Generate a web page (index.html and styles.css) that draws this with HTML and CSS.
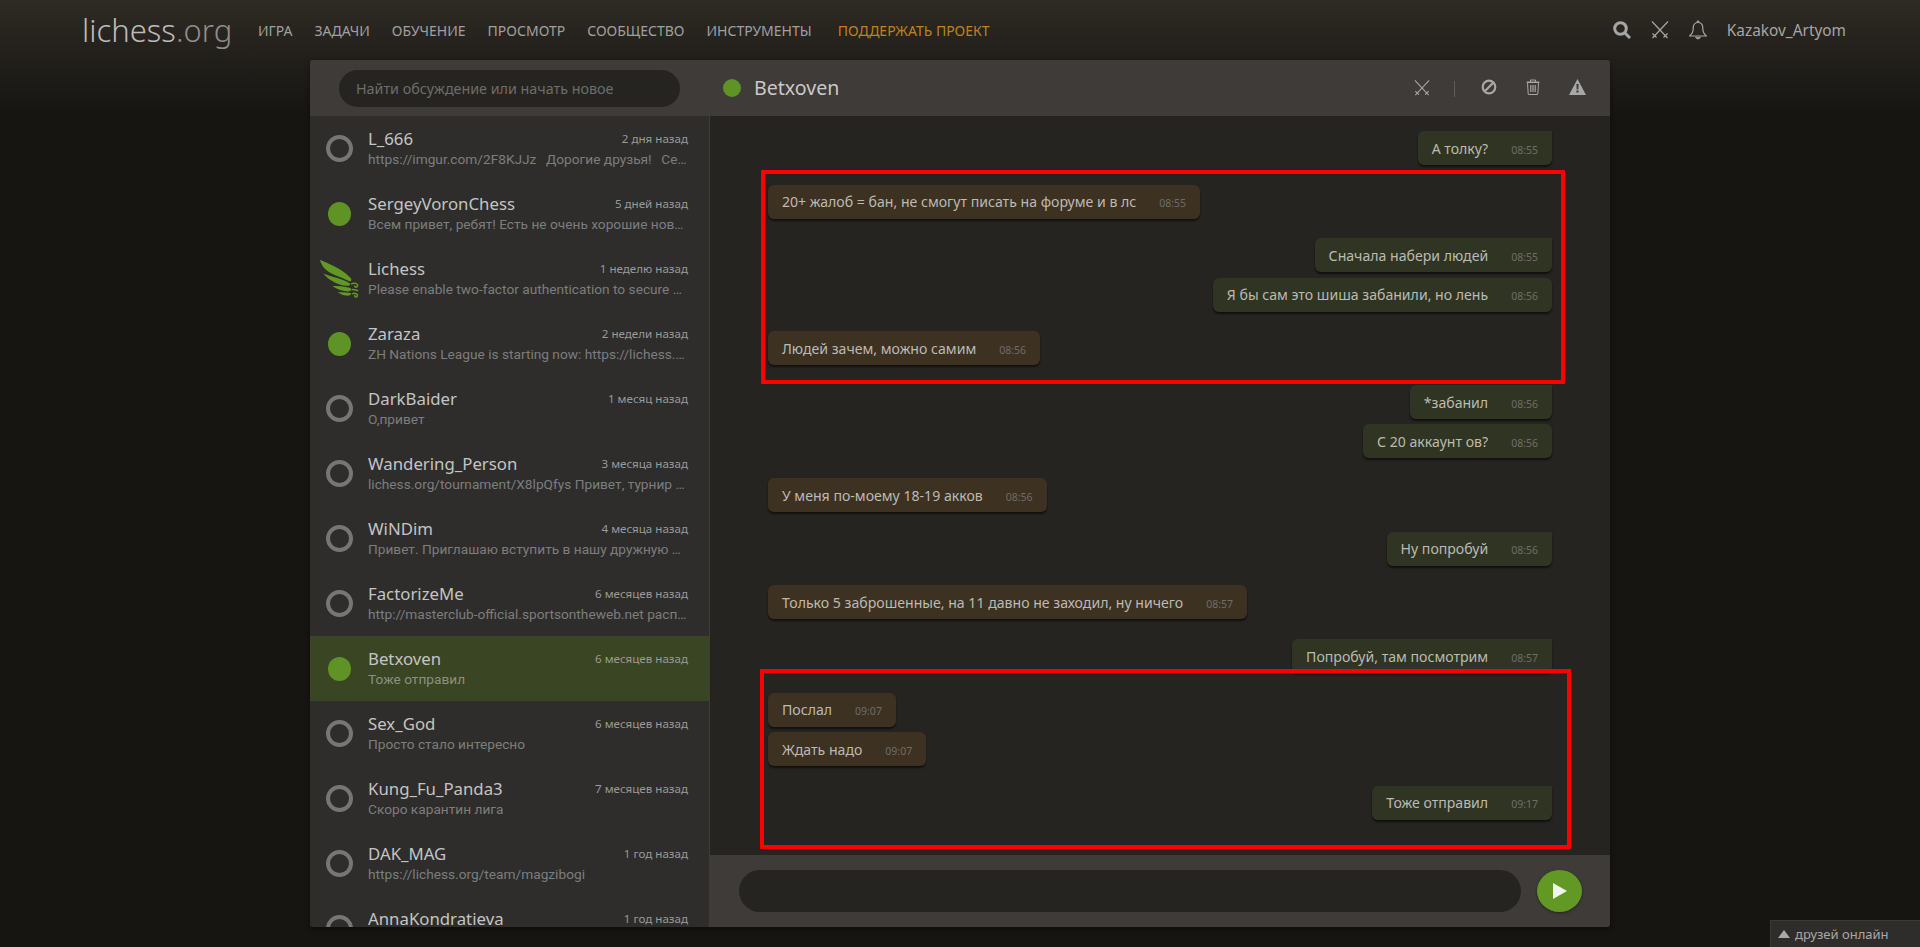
FILE: index.html
```html
<!DOCTYPE html>
<html lang="ru">
  <head>
    <meta charset="utf-8">
    <title>Входящие • lichess.org</title>
    <link rel="stylesheet" href="styles.css">
  </head>
  <body>
    <svg class="sprite" width="0" height="0">
      <symbol id="swords" viewBox="0 0 18 18">
        <path d="M1 .5 L16.500 17 M17 .5 L1.500 17 M1.500 12.500 L5.500 16.500 M16.500 12.500 L12.500 16.500" fill="none" stroke="currentColor" stroke-width="1.200"/>
      </symbol>
    </svg>

    <header class="topbar">
      <a class="logo">lichess<span class="logo-org">.org</span></a>
      <nav class="nav">
        <a>Игра</a>
        <a>Задачи</a>
        <a>Обучение</a>
        <a>Просмотр</a>
        <a>Сообщество</a>
        <a>Инструменты</a>
        <a class="nav-donate">Поддержать проект</a>
      </nav>
      <div class="top-right">
        <svg class="top-icon" viewBox="0 0 18 18">
          <circle cx="7.500" cy="7.500" r="5.800" fill="none" stroke="currentColor" stroke-width="3"/>
          <path d="M11.500 11.500 L17 17" stroke="currentColor" stroke-width="3" fill="none"/>
        </svg>
        <svg class="top-icon"><use href="#swords"/></svg>
        <svg class="top-icon top-bell" viewBox="0 0 18 20">
          <path d="M9 2.500 C5 2.500 4.200 5.500 4.200 8.500 C4.200 12 2.500 14.500 .6 16 L17.400 16 C15.500 14.500 13.800 12 13.800 8.500 C13.800 5.500 13 2.500 9 2.500 Z" fill="none" stroke="currentColor" stroke-width="1.200"/>
          <path d="M7.700 2.500 C7.700 .2 10.300 .2 10.300 2.500 M6.500 17.200 C7 19.500 11 19.500 11.500 17.200 Z" fill="currentColor" stroke="currentColor" stroke-width=".6"/>
        </svg>
        <a class="username">Kazakov_Artyom</a>
      </div>
    </header>

    <main class="inbox">
      <aside class="side">
        <div class="side-head">
          <div class="search">Найти обсуждение или начать новое</div>
        </div>
        <div class="threads">
          <div class="thread">
            <div class="avatar"><span class="ring"></span></div>
            <div class="thread-body">
              <div class="thread-top"><span class="name">L_666</span><time>2 дня назад</time></div>
              <div class="preview">https://imgur.com/2F8KJJz&nbsp;&thinsp; Дорогие друзья!&nbsp;&thinsp; Сегодня мы начинаем новый турнир</div>
            </div>
          </div>
          <div class="thread">
            <div class="avatar"><span class="dot"></span></div>
            <div class="thread-body">
              <div class="thread-top"><span class="name">SergeyVoronChess</span><time>5 дней назад</time></div>
              <div class="preview">Всем привет, ребят! Есть не очень хорошие новости для всех нас</div>
            </div>
          </div>
          <div class="thread">
            <div class="avatar">
              <svg class="wing" viewBox="28 26 120 118">
                <g fill="#629924">
                  <path d="M30 28 C50 38 94 52 124 84 C128 92 122 96 116 92 C95 80 60 72 46 56 C38 48 33 38 30 28 Z"/>
                  <path d="M40 70 C60 78 92 84 120 99 C124 104 118 108 110 107 C90 106 58 92 40 70 Z"/>
                  <path d="M68 108 C85 108 105 109 123 114 C127 120 122 124 116 124 C100 124 82 118 68 108 Z"/>
                  <path d="M84 127 C96 126 110 127 124 129 C126 132 122 137 116 137 C106 137 94 133 84 127 Z"/>
                </g>
                <path d="M124 102 C134 96 146 100 144 108 C142 114 134 112 136 106 M126 119 C132 117 138 120 146 122 M128 131 C137 128 146 132 143 139 C140 143 133 140 136 135" fill="none" stroke="#629924" stroke-width="4.500"/>
              </svg>
            </div>
            <div class="thread-body">
              <div class="thread-top"><span class="name">Lichess</span><time>1 неделю назад</time></div>
              <div class="preview">Please enable two-factor authentication to secure your account now</div>
            </div>
          </div>
          <div class="thread">
            <div class="avatar"><span class="dot"></span></div>
            <div class="thread-body">
              <div class="thread-top"><span class="name">Zaraza</span><time>2 недели назад</time></div>
              <div class="preview">ZH Nations League is starting now: https://lichess.org/tournament</div>
            </div>
          </div>
          <div class="thread">
            <div class="avatar"><span class="ring"></span></div>
            <div class="thread-body">
              <div class="thread-top"><span class="name">DarkBaider</span><time>1 месяц назад</time></div>
              <div class="preview">О,привет</div>
            </div>
          </div>
          <div class="thread">
            <div class="avatar"><span class="ring"></span></div>
            <div class="thread-body">
              <div class="thread-top"><span class="name">Wandering_Person</span><time>3 месяца назад</time></div>
              <div class="preview">lichess.org/tournament/X8lpQfys Привет, турнир начинается уже скоро</div>
            </div>
          </div>
          <div class="thread">
            <div class="avatar"><span class="ring"></span></div>
            <div class="thread-body">
              <div class="thread-top"><span class="name">WiNDim</span><time>4 месяца назад</time></div>
              <div class="preview">Привет. Приглашаю вступить в нашу дружную команду шахматистов</div>
            </div>
          </div>
          <div class="thread">
            <div class="avatar"><span class="ring"></span></div>
            <div class="thread-body">
              <div class="thread-top"><span class="name">FactorizeMe</span><time>6 месяцев назад</time></div>
              <div class="preview">http://masterclub-official.sportsontheweb.net расписание турниров клуба</div>
            </div>
          </div>
          <div class="thread thread-active">
            <div class="avatar"><span class="dot"></span></div>
            <div class="thread-body">
              <div class="thread-top"><span class="name">Betxoven</span><time>6 месяцев назад</time></div>
              <div class="preview">Тоже отправил</div>
            </div>
          </div>
          <div class="thread">
            <div class="avatar"><span class="ring"></span></div>
            <div class="thread-body">
              <div class="thread-top"><span class="name">Sex_God</span><time>6 месяцев назад</time></div>
              <div class="preview">Просто стало интересно</div>
            </div>
          </div>
          <div class="thread">
            <div class="avatar"><span class="ring"></span></div>
            <div class="thread-body">
              <div class="thread-top"><span class="name">Kung_Fu_Panda3</span><time>7 месяцев назад</time></div>
              <div class="preview">Скоро карантин лига</div>
            </div>
          </div>
          <div class="thread">
            <div class="avatar"><span class="ring"></span></div>
            <div class="thread-body">
              <div class="thread-top"><span class="name">DAK_MAG</span><time>1 год назад</time></div>
              <div class="preview">https://lichess.org/team/magzibogi</div>
            </div>
          </div>
          <div class="thread">
            <div class="avatar"><span class="ring"></span></div>
            <div class="thread-body">
              <div class="thread-top"><span class="name">AnnaKondratieva</span><time>1 год назад</time></div>
              <div class="preview">Добрый день</div>
            </div>
          </div>
        </div>
      </aside>

      <section class="chat">
        <div class="chat-head">
          <span class="dot dot-head"></span>
          <span class="chat-title">Betxoven</span>
          <div class="chat-actions">
            <svg class="act act-swords"><use href="#swords"/></svg>
            <span class="act-sep"></span>
            <svg class="act act-ban" viewBox="0 0 16 16">
              <circle cx="8" cy="8" r="6.300" fill="none" stroke="currentColor" stroke-width="2.200"/>
              <path d="M3.800 12.200 L12.200 3.800" stroke="currentColor" stroke-width="2.200"/>
            </svg>
            <svg class="act act-trash" viewBox="0 0 14 16">
              <path d="M1.500 3.500 H12.500 L11.800 15 C11.800 15.400 11.500 15.500 11 15.500 H3 C2.500 15.500 2.200 15.400 2.200 15 Z" fill="none" stroke="currentColor" stroke-width="1"/>
              <path d="M.5 3 H13.500 M4.500 2.800 V1 H9.500 V2.800" fill="none" stroke="currentColor" stroke-width="1"/>
              <path d="M4.800 6 V13 M7 6 V13 M9.200 6 V13" stroke="currentColor" stroke-width="1.200"/>
            </svg>
            <svg class="act act-warn" viewBox="0 0 17 16">
              <path fill-rule="evenodd" fill="currentColor" d="M8.500 0 L17 16 H0 Z M7.400 5 L7.700 10.500 H9.300 L9.600 5 Z M7.400 11.500 V13.500 H9.600 V11.500 Z"/>
            </svg>
          </div>
        </div>

        <div class="messages">
          <div class="group group-mine">
            <div class="msg msg-first"><span>А толку?</span><time>08:55</time></div>
          </div>
          <div class="group">
            <div class="msg"><span>20+ жалоб = бан, не смогут писать на форуме и в лс</span><time>08:55</time></div>
          </div>
          <div class="group group-mine">
            <div class="msg msg-first"><span>Сначала набери людей</span><time>08:55</time></div>
            <div class="msg"><span>Я бы сам это шиша забанили, но лень</span><time>08:56</time></div>
          </div>
          <div class="group">
            <div class="msg"><span>Людей зачем, можно самим</span><time>08:56</time></div>
          </div>
          <div class="group group-mine">
            <div class="msg msg-first"><span>*забанил</span><time>08:56</time></div>
            <div class="msg"><span>С 20 аккаунт ов?</span><time>08:56</time></div>
          </div>
          <div class="group">
            <div class="msg"><span>У меня по-моему 18-19 акков</span><time>08:56</time></div>
          </div>
          <div class="group group-mine">
            <div class="msg msg-first"><span>Ну попробуй</span><time>08:56</time></div>
          </div>
          <div class="group">
            <div class="msg"><span>Только 5 заброшенные, на 11 давно не заходил, ну ничего</span><time>08:57</time></div>
          </div>
          <div class="group group-mine">
            <div class="msg msg-first"><span>Попробуй, там посмотрим</span><time>08:57</time></div>
          </div>
          <div class="group">
            <div class="msg"><span>Послал</span><time>09:07</time></div>
            <div class="msg"><span>Ждать надо</span><time>09:07</time></div>
          </div>
          <div class="group group-mine">
            <div class="msg msg-first"><span>Тоже отправил</span><time>09:17</time></div>
          </div>

          <div class="mark mark-one"></div>
          <div class="mark mark-two"></div>
        </div>

        <div class="composer">
          <div class="composer-input"></div>
          <button class="send" type="button">
            <svg viewBox="0 0 14 16" width="14" height="16"><path d="M0 0 L14 8 L0 16 Z" fill="#f1f6ea"/></svg>
          </button>
        </div>
      </section>
    </main>

    <div class="friends"><span class="friends-arrow"></span>друзей онлайн</div>
  </body>
</html>
```

FILE: styles.css
```css
html, body {
  height: 100%;
}

body {
  margin: 0;
  height: 947px;
  overflow: hidden;
  font-family: "Noto Sans", sans-serif;
  font-size: 14px;
  color: #bababa;
  background: #161512 linear-gradient(to bottom, #2e2a24, #161512 116px) no-repeat;
}

.sprite {
  position: absolute;
}

/* top bar */
.topbar {
  display: flex;
  align-items: center;
  height: 60px;
  padding: 0 74px 0 82px;
}

.logo {
  font-size: 31px;
  font-weight: 300;
  width: 176px;
  color: #bababa;
  line-height: 60px;
}

.logo-org {
  color: #8d8d8d;
}

.nav {
  display: flex;
  gap: 22px;
  font-size: 14px;
  text-transform: uppercase;
  color: #a0a0a0;
}

.nav-donate {
  color: #c1811e;
  margin-left: 4px;
}

.top-right {
  margin-left: auto;
  display: flex;
  align-items: center;
  gap: 20px;
  color: #a6a6a6;
}

.top-icon {
  width: 18px;
  height: 18px;
}

.top-bell {
  height: 20px;
}

.username {
  font-size: 15.4px;
}

/* panel */
.inbox {
  display: flex;
  width: 1300px;
  height: 867px;
  margin: 0 auto;
  border-radius: 3px;
  overflow: hidden;
  box-shadow: 0 2px 6px rgba(0, 0, 0, .4);
}

.side {
  display: flex;
  flex-direction: column;
  flex: none;
  width: 400px;
  box-sizing: border-box;
  background: #2e2d2b;
  border-right: 1px solid #3f3d3a;
}

.side-head {
  display: flex;
  align-items: center;
  flex: none;
  height: 56px;
  padding: 0 29px;
  background: #3e3b38;
}

.search {
  flex: 1;
  height: 37px;
  line-height: 37px;
  padding-left: 17px;
  border-radius: 19px;
  background: #262421;
  color: #6e6d6b;
  font-size: 14.3px;
}

.threads {
  flex: 1;
  overflow: hidden;
}

.thread {
  display: flex;
  align-items: center;
  height: 65px;
  padding-right: 21px;
}

.thread-active {
  background: #3a4523;
}

.avatar {
  display: flex;
  justify-content: center;
  align-items: center;
  flex: none;
  width: 58px;
}

.ring {
  width: 27px;
  height: 27px;
  box-sizing: border-box;
  border: 4px solid #767676;
  border-radius: 50%;
}

.dot {
  display: block;
  width: 23px;
  height: 24px;
  border-radius: 50%;
  background: #5f9325;
}

.wing {
  width: 40px;
  height: 39px;
}

.thread-body {
  flex: 1;
  min-width: 0;
  margin-top: -2px;
}

.thread-top {
  display: flex;
  justify-content: space-between;
  align-items: center;
  height: 24px;
}

.name {
  font-size: 16.8px;
  color: #c4c4c4;
}

.thread-top time {
  font-size: 11.6px;
  color: #9a9a9a;
}

.preview {
  margin-top: -1px;
  font-family: Roboto, sans-serif;
  font-size: 13.7px;
  line-height: 20px;
  color: #7d7d7d;
  white-space: nowrap;
  overflow: hidden;
  text-overflow: ellipsis;
}

.thread-active .preview {
  color: #8a9180;
}

/* conversation */
.chat {
  position: relative;
  display: flex;
  flex-direction: column;
  flex: 1;
  background: #262421;
  min-width: 0;
}

.chat-head {
  display: flex;
  align-items: center;
  flex: none;
  height: 56px;
  padding-left: 13px;
  background: #3e3b38;
}

.dot-head {
  width: 18px;
  height: 18px;
}

.chat-title {
  margin: -2px 0 0 13px;
  font-size: 19.6px;
  color: #c9c9c9;
}

.chat-actions {
  display: flex;
  align-items: center;
  margin-left: auto;
  padding-right: 24px;
  color: #a8a8a8;
}

.act-swords {
  width: 16px;
  height: 18px;
}

.act-sep {
  width: 1px;
  height: 16px;
  margin: 2px 26px 0 24px;
  background: #5f5d5a;
}

.act-ban {
  width: 16px;
  height: 16px;
  margin-top: -2px;
}

.act-trash {
  width: 14px;
  height: 16px;
  margin: -2px 29px 0 29px;
}

.act-warn {
  width: 17px;
  height: 16px;
  margin-top: -2px;
}

.messages {
  flex: 1;
  display: flex;
  flex-direction: column;
  padding: 15px 58px 0;
  overflow: hidden;
}

.group {
  display: flex;
  flex-direction: column;
  align-items: flex-start;
  flex: none;
  margin-bottom: 14.37px;
}

.msg {
  display: flex;
  align-items: center;
  height: 34px;
  margin-bottom: 5.33px;
  padding: 0 14px;
  border-radius: 6px;
  background: #3d3121;
  color: #bcbab4;
  font-size: 14.1px;
  box-shadow: 0 2px 2px rgba(0, 0, 0, .55);
}

.msg time {
  margin: 3px 0 0 23px;
  font-size: 10.5px;
  color: #6f6d67;
}

.group-mine {
  align-items: flex-end;
}

.group-mine .msg {
  background: #2f3522;
}

.msg-first {
  border-top-right-radius: 0;
}

/* red frames drawn over the screenshot */
.mark {
  position: absolute;
  box-sizing: border-box;
  border: 4px solid #ff0000;
  border-radius: 1px;
}

.mark-one {
  left: 51px;
  top: 110px;
  width: 804px;
  height: 214px;
}

.mark-two {
  left: 50px;
  top: 609px;
  width: 811px;
  height: 180px;
}

.composer {
  display: flex;
  align-items: center;
  flex: none;
  gap: 16px;
  height: 72px;
  padding: 0 28px 0 29px;
  background: #3e3b38;
}

.composer-input {
  flex: 1;
  height: 42px;
  border-radius: 21px;
  background: #262421;
}

.send {
  display: flex;
  justify-content: center;
  align-items: center;
  width: 45px;
  height: 42px;
  padding: 0;
  border: none;
  border-radius: 50%;
  background: #629924;
  box-shadow: 0 1px 3px rgba(0, 0, 0, .4);
}

.friends {
  position: fixed;
  right: 0;
  bottom: 0;
  display: flex;
  align-items: center;
  width: 150px;
  height: 27px;
  box-sizing: border-box;
  padding-left: 7px;
  background: #2e2d2b;
  border: 1px solid #3a3936;
  border-width: 1px 0 0 1px;
  font-size: 13px;
  color: #a8a8a8;
}

.friends-arrow {
  width: 0;
  height: 0;
  margin-right: 5px;
  border: 6px solid transparent;
  border-top: 0;
  border-bottom: 8px solid #a8a8a8;
}
```
